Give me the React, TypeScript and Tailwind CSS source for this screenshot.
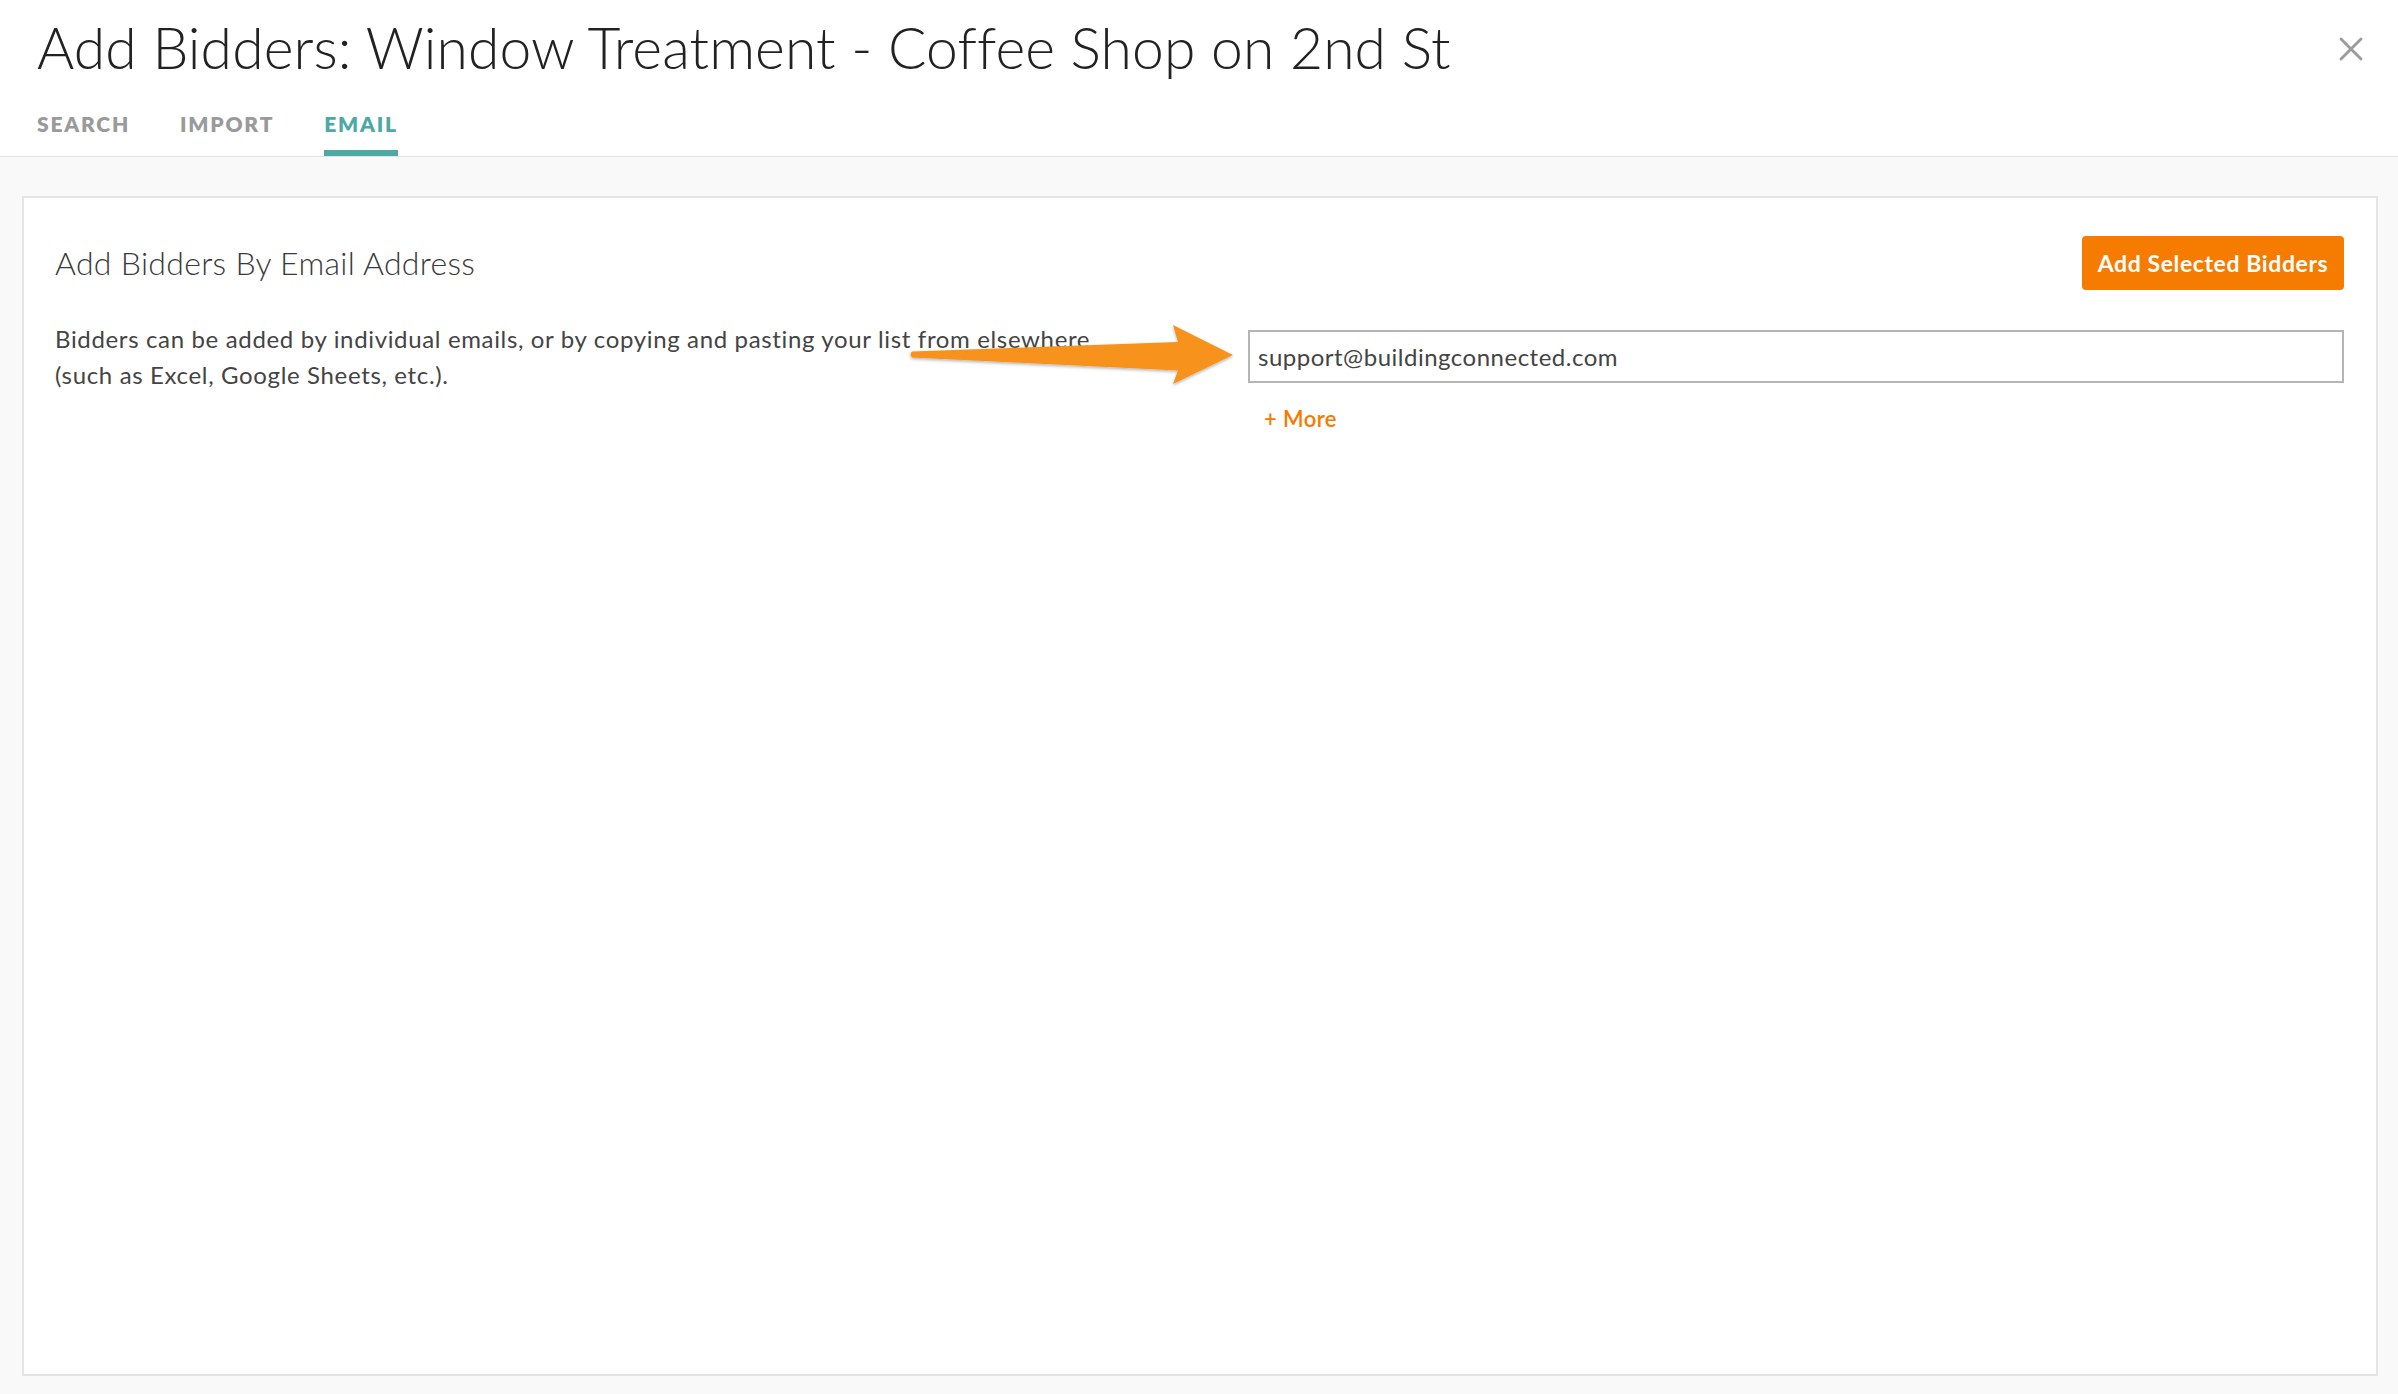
import { X } from "lucide-react";

const tabs = ["SEARCH", "IMPORT", "EMAIL"];

function Arrow() {
  return (
    <svg
      className="absolute left-[900px] top-[315px] pointer-events-none"
      width="345"
      height="80"
      viewBox="900 315 345 80"
    >
      <defs>
        <filter id="arrowShadow" x="-10%" y="-30%" width="120%" height="160%">
          <feDropShadow dx="0" dy="1.5" stdDeviation="1.5" floodColor="#000" floodOpacity="0.3" />
        </filter>
      </defs>
      <path
        d="M 912 351.5 L 1178 342 L 1173 325 L 1233 355 L 1173 384 L 1178 370.5 L 912 357.5 Q 909 354.5 912 351.5 Z"
        fill="#f7931e"
        filter="url(#arrowShadow)"
      />
    </svg>
  );
}

export default function App() {
  const active = "EMAIL";

  return (
    <div className="relative min-h-[1394px] bg-[#f9f9f9] font-['Lato',sans-serif] flex flex-col">
      <div className="bg-white border-b border-[#e3e3e3] pl-[37px] pr-[27px] pt-[13px]">
        <div className="flex items-center justify-between">
          <h1 className="text-[57px] leading-[68px] font-light tracking-[0.1px] text-[#222]">
            Add Bidders: Window Treatment - Coffee Shop on 2nd St
          </h1>
          <X size={40} strokeWidth={1.7} className="text-[#9b9b9b] mt-[4px]" />
        </div>
        <div className="flex gap-[50px] mt-[30px]">
          {tabs.map((t) => (
            <div
              key={t}
              className={`text-[21px] leading-[25px] font-extrabold tracking-[1.8px] pb-[14px] border-b-[6px] ${
                t === active
                  ? "text-[#4ea9a5] border-[#4ea9a5]"
                  : "text-[#9a9a9a] border-transparent"
              }`}
            >
              {t}
            </div>
          ))}
        </div>
      </div>

      <div className="flex-1 mt-[39px] ml-[22px] mr-[20px] mb-[18px] bg-white border-2 border-[#e4e4e4] pt-[38px] pl-[31px] pr-[32px]">
        <div className="flex items-center justify-between">
          <h2 className="text-[32px] font-light tracking-[0.3px] text-[#3a3a3a]">
            Add Bidders By Email Address
          </h2>
          <button className="bg-[#f57c00] text-white text-[23px] font-bold tracking-[0.6px] rounded-[4px] w-[262px] h-[54px]">
            Add Selected Bidders
          </button>
        </div>

        <div className="flex items-start justify-between mt-[31px]">
          <p className="text-[24px] leading-[36px] tracking-[0.65px] text-[#444]">
            Bidders can be added by individual emails, or by copying and pasting your list from elsewhere
            <br />
            (such as Excel, Google Sheets, etc.).
          </p>
          <div className="w-[1096px] mt-[9px]">
            <input
              defaultValue="support@buildingconnected.com"
              className="w-full h-[53px] border-2 border-[#b5b5b5] px-[8px] text-[24px] tracking-[0.5px] text-[#444] outline-none"
            />
            <div className="mt-[21px] pl-[16px] text-[22px] leading-[30px] font-semibold tracking-[0.4px] text-[#f47b00]">
              + More
            </div>
          </div>
        </div>
      </div>

      <Arrow />
    </div>
  );
}
